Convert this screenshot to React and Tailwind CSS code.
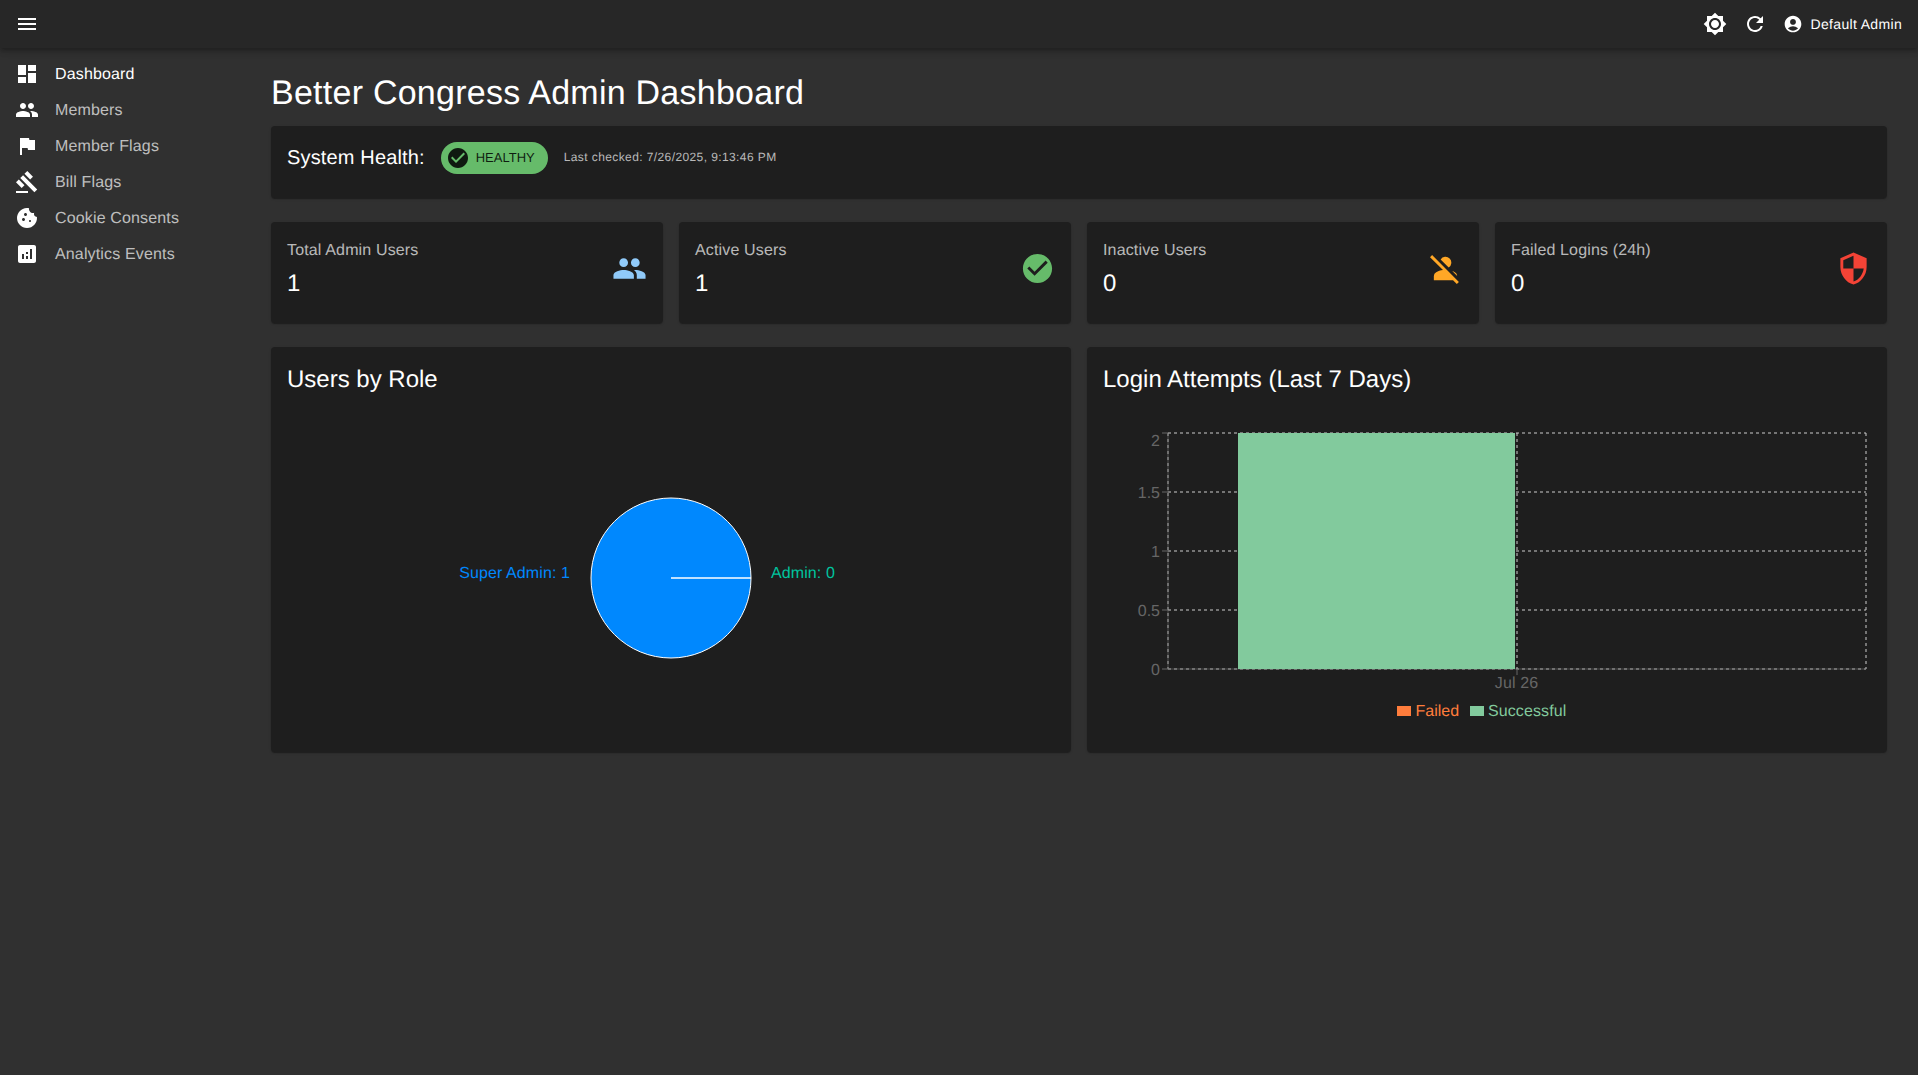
import React from "react";
import {
  MdMenu, MdDashboard, MdPeople, MdFlag, MdGavel, MdCookie, MdAnalytics,
  MdBrightness7, MdRefresh, MdAccountCircle, MdCheckCircle, MdPersonOff, MdSecurity,
} from "react-icons/md";

const nav = [
  { label: "Dashboard", Icon: MdDashboard, active: true },
  { label: "Members", Icon: MdPeople },
  { label: "Member Flags", Icon: MdFlag },
  { label: "Bill Flags", Icon: MdGavel },
  { label: "Cookie Consents", Icon: MdCookie },
  { label: "Analytics Events", Icon: MdAnalytics },
];

const stats = [
  { label: "Total Admin Users", value: "1", Icon: MdPeople, color: "text-[#90caf9]" },
  { label: "Active Users", value: "1", Icon: MdCheckCircle, color: "text-[#66bb6a]" },
  { label: "Inactive Users", value: "0", Icon: MdPersonOff, color: "text-[#ffa726]" },
  { label: "Failed Logins (24h)", value: "0", Icon: MdSecurity, color: "text-[#f44336]" },
];

const cardClass = "rounded bg-[#1e1e1e] shadow-[0_2px_1px_-1px_rgba(0,0,0,0.2),0_1px_1px_0_rgba(0,0,0,0.14),0_1px_3px_0_rgba(0,0,0,0.12)]";

function PieChart() {
  return (
    <svg viewBox="0 0 768 325" className="block h-[325px] w-[768px]">
      <circle cx="384" cy="175" r="80" fill="#0088FE" stroke="#fff" strokeWidth="1" />
      <line x1="384" y1="175" x2="464" y2="175" stroke="#fff" strokeWidth="1.5" />
      <text x="283" y="175" textAnchor="end" fill="#0088FE" fontSize="16" letterSpacing="0.1">Super Admin: 1</text>
      <text x="484" y="175" fill="#00C49F" fontSize="16" letterSpacing="0.1">Admin: 0</text>
    </svg>
  );
}

function BarChart() {
  const left = 65, right = 763, mid = 414;
  const rows = [
    { y: 30, label: "2" },
    { y: 89, label: "1.5" },
    { y: 148, label: "1" },
    { y: 207, label: "0.5" },
    { y: 266, label: "0" },
  ];
  return (
    <svg viewBox="0 0 768 325" className="block h-[325px] w-[768px]">
      {rows.map((r) => (
        <line key={r.y} x1={left} x2={right} y1={r.y} y2={r.y} stroke="#ccc" strokeDasharray="3 3" />
      ))}
      {[left, mid, right].map((x) => (
        <line key={x} x1={x} x2={x} y1={30} y2={266} stroke="#ccc" strokeDasharray="3 3" />
      ))}
      <line x1={left} x2={left} y1={30} y2={266} stroke="#666" strokeOpacity="0.7" />
      <line x1={left} x2={right} y1={266} y2={266} stroke="#666" strokeOpacity="0.7" />
      {rows.map((r) => (
        <g key={r.label}>
          <line x1={left - 6} x2={left} y1={r.y} y2={r.y} stroke="#666" />
          <text x="57" y={r.label === "2" ? r.y + 12.5 : r.y + 5.5} textAnchor="end" fill="#666" fontSize="16">{r.label}</text>
        </g>
      ))}
      <line x1={mid} x2={mid} y1={266} y2={272} stroke="#666" />
      <text x={mid - 0.5} y="285" textAnchor="middle" fill="#666" fontSize="16" letterSpacing="0.1">Jul 26</text>
      <rect x="135" y="30" width="277" height="236" fill="#82ca9d" />
      <rect x="294" y="303" width="14" height="10" fill="#ff7d3c" />
      <text x="312.5" y="313" fill="#ff7d3c" fontSize="16">Failed</text>
      <rect x="367" y="303" width="14" height="10" fill="#82ca9d" />
      <text x="385" y="313" fill="#82ca9d" fontSize="16" letterSpacing="0.1">Successful</text>
    </svg>
  );
}

export default function App() {
  return (
    <div className="flex min-h-screen flex-col overflow-hidden bg-[#303030] font-['Liberation_Sans',Arial,sans-serif] text-white [text-rendering:geometricPrecision]">
      <header className="relative z-10 flex h-12 items-center justify-between bg-[#272727] pl-[15px] pr-4 shadow-[0_2px_4px_-1px_rgba(0,0,0,0.2),0_4px_5px_0_rgba(0,0,0,0.14),0_1px_10px_0_rgba(0,0,0,0.12)]">
        <MdMenu className="text-white" size={24} />
        <div className="flex items-center">
          <MdBrightness7 size={24} />
          <MdRefresh size={24} className="ml-4" />
          <MdAccountCircle size={20} className="ml-[16px]" />
          <span className="ml-[8px] text-[14px] tracking-[0.33px] text-white">Default Admin</span>
        </div>
      </header>

      <div className="flex flex-1">
        <aside className="w-[247px] shrink-0 pt-2">
          <ul>
            {nav.map(({ label, Icon, active }) => (
              <li key={label} className="flex h-9 items-center gap-4 px-[15px]">
                <Icon size={24} className="shrink-0 text-white" />
                <span className={`pt-[2px] text-base tracking-[0.15px] ${active ? "text-white" : "text-white/70"}`}>{label}</span>
              </li>
            ))}
          </ul>
        </aside>

        <main className="flex min-w-0 flex-1 flex-col pl-6 pr-[31px] pt-6">
          <h1 className="mb-3 text-[34px] leading-[42px] tracking-[0.25px]">Better Congress Admin Dashboard</h1>

          <section className={`${cardClass} mb-6 flex h-[72px] items-start gap-4 px-4 pt-4`}>
            <div className="flex h-8 items-center gap-4">
              <span className="text-xl leading-[30px] tracking-[0.15px]">System Health:</span>
              <span className="flex h-8 items-center rounded-2xl bg-[#66bb6a] pl-[5px] pr-[13px] text-[13px] text-black/85">
                <MdCheckCircle size={24} className="text-[#0f1a10]" />
                <span className="ml-[6px]">HEALTHY</span>
              </span>
              <span className="-mt-[3px] text-xs tracking-[0.4px] text-white/70">Last checked: 7/26/2025, 9:13:46 PM</span>
            </div>
          </section>

          <section className="mb-6 grid grid-cols-4 gap-4">
            {stats.map(({ label, value, Icon, color }) => (
              <div key={label} className={`${cardClass} flex h-[101px] items-start justify-between px-4 pt-[17px]`}>
                <div>
                  <div className="mb-[5px] text-base leading-6 tracking-[0.15px] text-white/70">{label}</div>
                  <div className="text-2xl leading-8">{value}</div>
                </div>
                <Icon size={35} className={`${color} mt-3`} />
              </div>
            ))}
          </section>

          <section className="grid grid-cols-2 gap-4">
            <div className={`${cardClass} px-4 pb-6 pt-[17px]`}>
              <h2 className="mb-[7px] text-2xl leading-8">Users by Role</h2>
              <PieChart />
            </div>
            <div className={`${cardClass} px-4 pb-6 pt-[17px]`}>
              <h2 className="mb-[7px] text-2xl leading-8">Login Attempts (Last 7 Days)</h2>
              <BarChart />
            </div>
          </section>
        </main>
      </div>
    </div>
  );
}
